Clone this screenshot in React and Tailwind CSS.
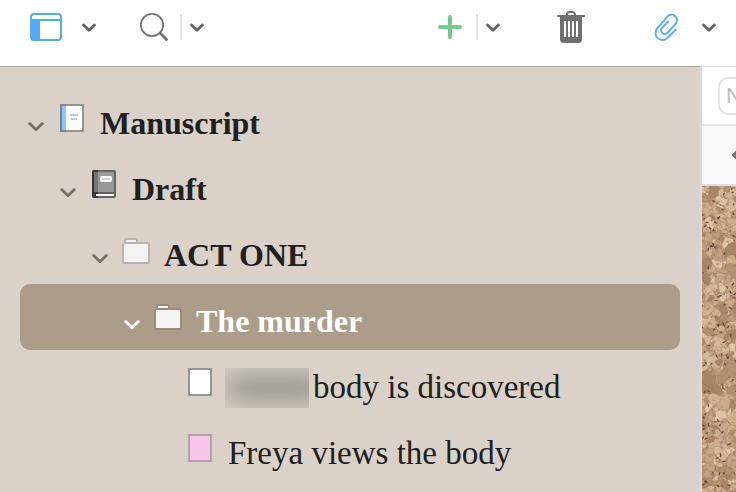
const Chevron = ({ className = "text-[#666666]" }) => (
  <svg viewBox="0 0 16 10" className={`w-4 h-2.5 ${className}`} fill="none" stroke="currentColor">
    <path d="M1.6 1.6 8 7.8l6.4-6.2" strokeWidth="2.8" strokeLinecap="round" strokeLinejoin="round" />
  </svg>
);

const MenuChevron = () => (
  <svg viewBox="0 0 14 10" className="w-3.5 h-2.5 mt-0.5 text-[#616161]" fill="none" stroke="currentColor">
    <path d="M1.6 2 7 7.2 12.4 2" strokeWidth="2.8" strokeLinecap="round" strokeLinejoin="round" />
  </svg>
);

const Divider = () => <span className="w-0.5 h-[26px] bg-[#e2e2e2]" />;

const ManuscriptIcon = () => (
  <svg viewBox="0 0 28 28" className="size-7">
    <path fill="#98938b" d="M2 0h24v28H2z" />
    <path fill="#fff" d="M8 2h16v24H8z" />
    <path fill="#728594" d="M2 0h6v28H2z" />
    <path fill="#8cc8ff" d="M4 2h4v24H4z" />
    <path fill="#c9c9c9" d="M12 10h8v2h-8zM13 14h6v2h-6z" />
  </svg>
);

const DraftIcon = () => (
  <svg viewBox="0 0 28 28" className="size-7">
    <rect x="2" width="24" height="28" rx="2" fill="#65625e" />
    <path fill="#999" d="M8 2h16v20H8z" />
    <path fill="#393837" d="M4 0h4v28H4a2 2 0 0 1-2-2V2a2 2 0 0 1 2-2z" />
    <path fill="#757575" d="M4 2h4v20H4z" />
    <rect x="10" y="6" width="12" height="6" rx="2" fill="#fff" />
    <path fill="#d4d4d4" d="M12 8h8v2h-8z" />
    <path fill="#fff" d="M6 24h18v2H6z" />
  </svg>
);

const FolderIcon = ({ edge = "#b9b3ab" }) => (
  <svg viewBox="0 0 28 28" className="size-7">
    <path fill={edge} d="M2 8V4a2 2 0 0 1 2-2h10a2 2 0 0 1 2 2v2h10a2 2 0 0 1 2 2v18a2 2 0 0 1-2 2H2a2 2 0 0 1-2-2V8z" />
    <path fill="#f3f3f3" d="M4 4h10v2H4zM2 8h24v18H2z" />
  </svg>
);

const CardIcon = ({ fill = "#ffffff", edge = "#98938b" }) => (
  <svg viewBox="0 0 28 28" className="size-7">
    <path fill={edge} d="M2 0h24v28H2z" />
    <path fill={fill} d="M4 2h20v24H4z" />
  </svg>
);

const Redacted = () => (
  <span aria-hidden="true" className="block w-[84px] h-10 mt-2.5 mr-1 overflow-hidden bg-[#d0c8bf]">
    <span className="block w-24 h-6 mt-2 ml-1 rounded-full bg-[#9d9994] blur-[10px]" />
  </span>
);

const rows = [
  { title: "Manuscript", icon: <ManuscriptIcon />, indent: "pl-2", open: true },
  { title: "Draft", icon: <DraftIcon />, indent: "pl-10", open: true },
  { title: "ACT ONE", icon: <FolderIcon />, indent: "pl-18", open: true },
  { title: "The murder", icon: <FolderIcon edge="#978b7b" />, indent: "pl-26", open: true, selected: true },
  { title: "body is discovered", icon: <CardIcon />, indent: "pl-34", hidden: true },
  { title: "Freya views the body", icon: <CardIcon fill="#f7c4e9" edge="#b9a2a8" />, indent: "pl-34" },
];

const Row = ({ title, icon, indent, open, selected, hidden }) => (
  <li
    className={`flex items-center h-[66px] rounded-[10px] ${indent} ${
      selected ? "bg-[#ab9d8a] text-white" : "text-[#20201e]"
    }`}
  >
    {open ? (
      <button aria-label={`Collapse ${title}`} className="w-4 mr-3.5 pt-4">
        <Chevron className={selected ? "text-white" : "text-[#74706a]"} />
      </button>
    ) : (
      <span className="w-4 mr-3.5" />
    )}
    <span className="pb-0.5 mr-[11px]">{icon}</span>
    {hidden && <Redacted />}
    <span
      className={`whitespace-nowrap ${hidden ? "" : "pl-[3px]"} ${
        open ? "pt-2 text-[32px] font-bold" : "pt-2.5 text-[33px]"
      }`}
    >
      {title}
    </span>
  </li>
);

// Seeded so the cork looks the same on every render
const makeCork = () => {
  let seed = 41;
  const rnd = () => {
    seed = (seed * 16807) % 2147483647;
    return seed / 2147483647;
  };
  const tones = ["#cbab8b", "#be9d7b", "#d6b998", "#b5926f", "#cfb08f", "#c4a382", "#a88565", "#dfc5a4"];
  const chip = (size, stretch) => {
    const cx = rnd() * 38 - 2;
    const cy = rnd() * 310 - 2;
    const turn = rnd() * 6.28;
    const points = [];
    for (let i = 0; i < 6; i++) {
      const a = (i / 6) * 6.28;
      const r = size * (0.6 + rnd() * 0.6);
      const x = Math.cos(a) * r * stretch;
      const y = Math.sin(a) * r;
      const px = cx + x * Math.cos(turn) - y * Math.sin(turn);
      const py = cy + x * Math.sin(turn) + y * Math.cos(turn);
      points.push(`${px.toFixed(1)},${py.toFixed(1)}`);
    }
    return points.join(" ");
  };
  const chips = [];
  for (let i = 0; i < 900; i++) {
    const dark = rnd() < 0.36;
    chips.push({
      points: dark ? chip(0.7, 2.8) : chip(2 + rnd() * 5, 1.4),
      fill: dark ? "#553c31" : tones[Math.floor(rnd() * tones.length)],
    });
  }
  return chips;
};

const cork = makeCork();

const Corkboard = () => (
  <svg viewBox="0 0 34 306" preserveAspectRatio="xMinYMin slice" className="block w-full flex-1 min-h-0 bg-[#be9d7b]">
    <filter id="grain" x="0" y="0" width="100%" height="100%">
      <feTurbulence type="fractalNoise" baseFrequency="0.22" numOctaves="3" seed="7" />
      <feColorMatrix values="0 0 0 0 0.35  0 0 0 0 0.23  0 0 0 0 0.16  3 0 0 0 -1.6" />
    </filter>
    {cork.map((c, i) => (
      <polygon key={i} points={c.points} fill={c.fill} stroke="#7d5d45" strokeOpacity="0.45" strokeWidth="0.5" />
    ))}
    <rect width="34" height="306" filter="url(#grain)" />
  </svg>
);

const Toolbar = () => (
  <header className="flex items-center justify-between h-[66px] pl-[30px] pr-5 pb-3 bg-white">
    <div className="flex items-center">
      <button aria-label="View" className="mr-5">
        <svg viewBox="0 0 32 28" className="w-8 h-7" fill="none">
          <rect x="1" y="1" width="30" height="26" rx="3" stroke="#53abf5" strokeWidth="2" />
          <path fill="#53abf5" d="M1 6h30v2H10v19H3l-2-2z" />
        </svg>
      </button>
      <button aria-label="View options" className="mr-11"><MenuChevron /></button>
      <button aria-label="Search" className="mr-3">
        <svg viewBox="0 0 28 28" className="size-7" fill="none" stroke="#737373">
          <circle cx="12" cy="12" r="11.1" strokeWidth="1.8" />
          <path d="m20.3 20.3 6.2 6.2" strokeWidth="2.8" strokeLinecap="round" />
        </svg>
      </button>
      <Divider />
      <button aria-label="Search options" className="ml-2"><MenuChevron /></button>
    </div>

    <div className="flex items-center">
      <button aria-label="Add" className="mr-3.5">
        <svg viewBox="0 0 24 24" className="size-6" stroke="#73c990" strokeWidth="4" strokeLinecap="round">
          <path d="M12 2v20M2 12h20" />
        </svg>
      </button>
      <Divider />
      <button aria-label="Add options" className="ml-2 mr-[57px]"><MenuChevron /></button>
      <button aria-label="Trash" className="mr-[69px]">
        <svg viewBox="0 0 28 32" className="w-7 h-8" fill="none">
          <path d="M10 5V3.5A2.5 2.5 0 0 1 12.5 1h3A2.5 2.5 0 0 1 18 3.5V5" stroke="#707070" strokeWidth="2" />
          <path d="M1 5h26" stroke="#707070" strokeWidth="2" strokeLinecap="round" />
          <path d="M3 5h22v23a4 4 0 0 1-4 4H7a4 4 0 0 1-4-4z" fill="#707070" />
          <path d="M8 10v16M12 10v16M16 10v16M20 10v16" stroke="#fff" strokeWidth="2" />
        </svg>
      </button>
      <button aria-label="Attach" className="mr-[22px]">
        <svg viewBox="0 0 26 28" className="w-[26px] h-7" fill="none" stroke="#56acf6" strokeWidth="1.9" strokeLinecap="round" strokeLinejoin="round">
          <path d="m21.9 16.6-8.3 8.2A7 7 0 0 1 3.4 15.2L14 3a5.5 5.5 0 0 1 8 7.4L13.3 20a3.7 3.7 0 0 1-5.4-5l6.4-6.6" />
        </svg>
      </button>
      <button aria-label="Attach options"><MenuChevron /></button>
    </div>
  </header>
);

const App = () => {
  return (
    <div className="flex flex-col h-screen overflow-hidden bg-white">
      <Toolbar />

      <div className="flex flex-1 min-h-0">
        {/* Binder */}
        <nav className="flex-1 min-w-0 overflow-hidden px-5 pt-[19px] bg-[#dad2c9] border-t border-t-[#aea494] font-['Liberation_Serif',serif]">
          <ul>
            {rows.map((row) => (
              <Row key={row.title} {...row} />
            ))}
          </ul>
        </nav>

        {/* Editor */}
        <main className="flex flex-col w-9 shrink-0 overflow-hidden border-t border-t-[#d9d9d9] border-l-2 border-l-[#dcdbda]">
          <div className="flex items-center h-[59px] shrink-0 pl-4 border-b-2 border-[#e2e2e2]">
            <input
              type="text"
              aria-label="Search"
              placeholder="N"
              className="w-60 h-[38px] shrink-0 pl-1.5 border-2 border-[#e3e3e3] rounded-[10px] text-[22px] placeholder:text-[#bdbdbd] font-['Liberation_Sans',sans-serif]"
            />
          </div>
          <div className="flex items-center h-[60px] shrink-0 pl-[29px] bg-[#fafafa] border-b-2 border-[#dedede]">
            <button aria-label="Back" className="shrink-0">
              <svg viewBox="0 0 10 14" className="w-2.5 h-3.5" fill="none" stroke="#707070">
                <path d="M7.6 2 2.4 7l5.2 5" strokeWidth="2.8" strokeLinecap="round" strokeLinejoin="round" />
              </svg>
            </button>
          </div>
          <Corkboard />
        </main>
      </div>
    </div>
  );
};

export default App;
